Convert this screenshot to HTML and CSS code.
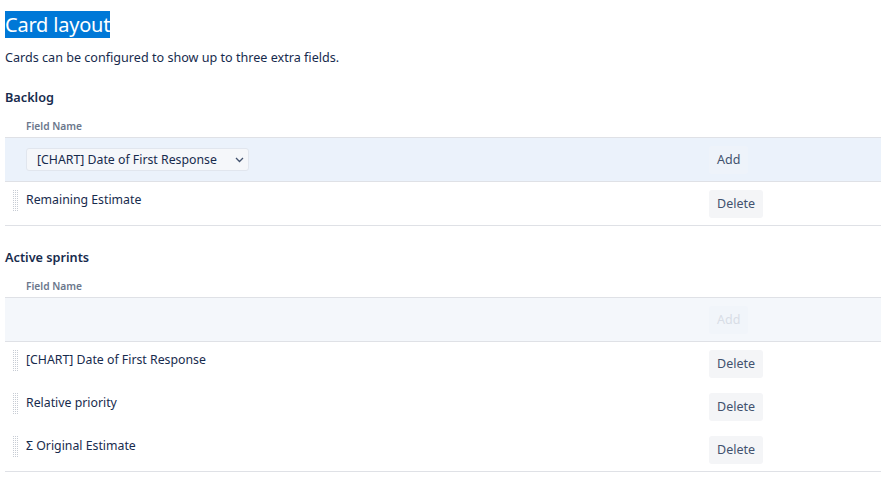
FILE: index.html
```html
<!DOCTYPE html>
<html lang="en">
<head>
<meta charset="utf-8">
<title>Card layout</title>
<link rel="stylesheet" href="styles.css">
</head>
<body>
<div class="page">
  <h1 class="title"><span class="sel">Card layout</span></h1>
  <p class="desc">Cards can be configured to show up to three extra fields.</p>

  <section class="group">
    <h2 class="group-title">Backlog</h2>
    <div class="fields">
      <div class="head"><span class="head-name">Field Name</span></div>
      <div class="row add-row">
        <span class="handle-space"></span>
        <div class="name">
          <div class="select">
            <span>[CHART] Date of First Response</span>
            <svg class="chev" width="9" height="6" viewBox="0 0 9 6"><path d="M1 1l3.5 3.5L8 1" fill="none" stroke="#42526e" stroke-width="1.3"/></svg>
          </div>
        </div>
        <div class="action"><button class="btn">Add</button></div>
      </div>
      <div class="row">
        <span class="handle"></span>
        <div class="name">Remaining Estimate</div>
        <div class="action"><button class="btn">Delete</button></div>
      </div>
    </div>
  </section>

  <section class="group second">
    <h2 class="group-title">Active sprints</h2>
    <div class="fields">
      <div class="head"><span class="head-name">Field Name</span></div>
      <div class="row add-row empty">
        <span class="handle-space"></span>
        <div class="name"></div>
        <div class="action"><button class="btn disabled">Add</button></div>
      </div>
      <div class="row">
        <span class="handle"></span>
        <div class="name">[CHART] Date of First Response</div>
        <div class="action"><button class="btn">Delete</button></div>
      </div>
      <div class="row">
        <span class="handle"></span>
        <div class="name">Relative priority</div>
        <div class="action"><button class="btn">Delete</button></div>
      </div>
      <div class="row">
        <span class="handle"></span>
        <div class="name">Σ Original Estimate</div>
        <div class="action"><button class="btn">Delete</button></div>
      </div>
    </div>
  </section>
</div>
</body>
</html>
```

FILE: styles.css
```css
* { box-sizing: border-box; }
body {
  margin: 0;
  background: #ffffff;
  font-family: "Noto Sans", "Open Sans", sans-serif;
  color: #172b4d;
}
.page {
  width: 881px;
  padding: 11px 0 0 5px;
}
.title {
  margin: 0;
  font-size: 20px;
  font-weight: 400;
  line-height: 27px;
  letter-spacing: -0.2px;
}
.sel {
  background: #0078d7;
  color: #ffffff;
}
.desc {
  margin: 11px 0 0;
  font-size: 12.6px;
  line-height: 18px;
  color: #172b4d;
}
.group { margin-top: 20px; }
.group.second { margin-top: 21px; }
.group-title {
  margin: 0;
  font-size: 12.7px;
  font-weight: 600;
  line-height: 20px;
}
.fields {
  margin-top: 6px;
  border-bottom: 1px solid #dfe1e6;
}
.head {
  padding: 0 0 2px 21px;
  border-bottom: 1px solid #dfe1e6;
}
.head-name {
  font-size: 10.2px;
  font-weight: 600;
  color: #6b778c;
  line-height: 16px;
}
.row {
  display: flex;
  align-items: flex-start;
  height: 43px;
  font-size: 12.3px;
}
.add-row {
  height: 44px;
  background: #ebf2fb;
  border-bottom: 1px solid #dfe1e6;
  align-items: center;
}
.add-row.empty { background: #f4f7fb; }
.handle, .handle-space {
  width: 21px;
  flex: none;
}
.handle {
  margin: 8px 8px 0 7px;
  width: 6px;
  height: 21px;
  background-image: conic-gradient(#c7ccd4 25%, transparent 0);
  background-size: 2px 2px;
}
.name {
  flex: 1;
  padding-top: 9px;
  line-height: 18px;
}
.add-row .name { padding-top: 0; }
.action {
  width: 172px;
  flex: none;
  padding-top: 8px;
}
.add-row .action { padding-top: 0; }
.btn {
  font-family: inherit;
  font-size: 12.5px;
  color: #42526e;
  background: #f4f5f7;
  border: 0;
  border-radius: 3px;
  height: 28px;
  padding: 0 8px;
  line-height: 28px;
}
.add-row .btn { background: #eef3fa; }
.btn.disabled {
  color: #d8dde6;
  background: #f1f5fa;
}
.select {
  display: inline-flex;
  align-items: center;
  justify-content: space-between;
  width: 223px;
  height: 23px;
  padding: 0 4px 0 10px;
  background: #f5f7fa;
  border: 1px solid #e1e6ee;
  border-radius: 3px;
  font-size: 12.3px;
  color: #172b4d;
}
.chev { flex: none; }
```
